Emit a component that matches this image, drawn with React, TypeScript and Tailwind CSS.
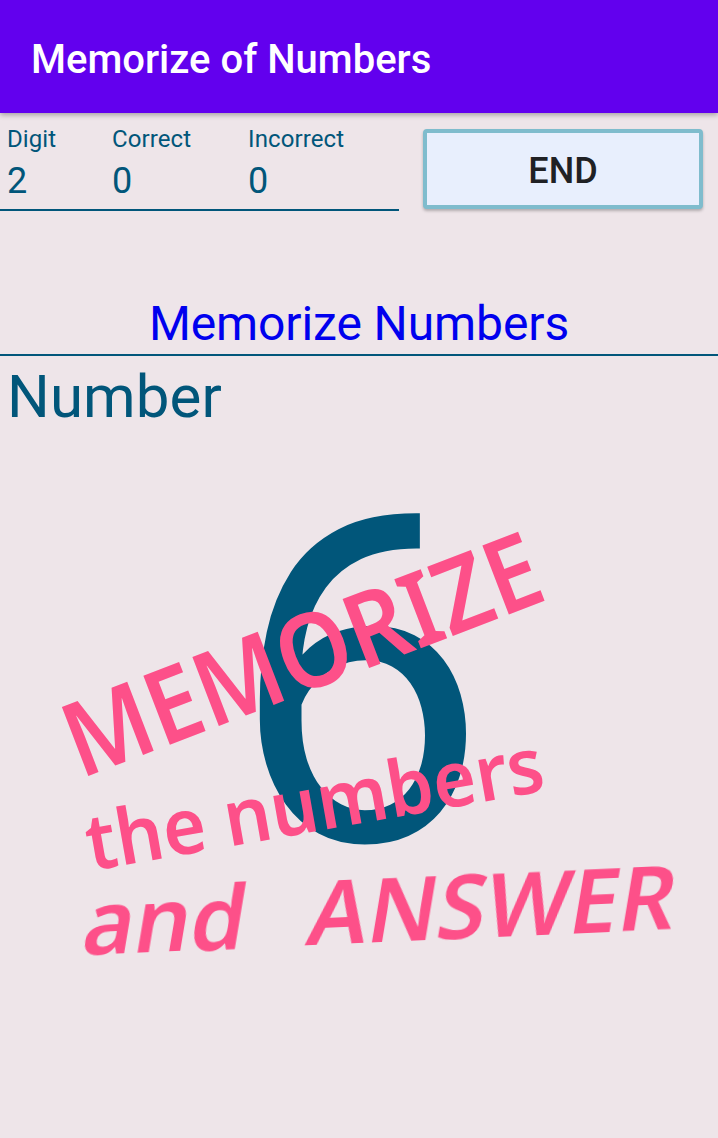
const teal = 'text-[#01567a]';

function Stat({ label, value, width }: { label: string; value: string; width: string }) {
    return (
        <div className={`${width} shrink-0 ${teal}`}>
            <div className="mt-[1px] text-[24px] leading-[28px] tracking-[0.1px]">{label}</div>
            <div className="mt-[7px] text-[36px] leading-[42px] tracking-[0.5px]">{value}</div>
        </div>
    );
}

export default function App() {
    return (
        <div className="relative h-[1138px] w-[718px] overflow-hidden bg-[#eee5e9] font-['Roboto',sans-serif]">
            {/* App bar */}
            <header className="flex h-[113px] items-center bg-[#6200ee] pl-[31px] pt-[7px] shadow-[0_2px_5px_rgba(0,0,0,0.3)]">
                <h1 className="text-[40px] font-medium leading-none text-white">Memorize of Numbers</h1>
            </header>

            {/* Score row */}
            <div className="flex items-start">
                <div className="mt-[11px] h-[87px] w-[399px] overflow-hidden border-b-2 border-[#01567a] pl-[7px]">
                    <div className="flex">
                        <Stat label="Digit" value="2" width="w-[105px]" />
                        <Stat label="Correct" value="0" width="w-[136px]" />
                        <Stat label="Incorrect" value="0" width="w-[120px]" />
                    </div>
                </div>
                <button
                    type="button"
                    className="ml-[24px] mt-[16px] h-[80px] w-[280px] rounded-[4px] border-[4px] border-[#7fbccd] bg-[#e8effd] pt-[3px] text-[36px] font-medium text-[#202124] shadow-[0_2px_3px_rgba(0,0,0,0.25)]"
                >
                    END
                </button>
            </div>

            <h2 className="mt-[84px] text-center text-[48px] leading-[57px] tracking-[-0.1px] text-[#0000ee]">Memorize Numbers</h2>
            <div className="mt-[2px] h-[2px] bg-[#01567a]" />
            <p className={`mt-[5px] pl-[7px] text-[60px] leading-[72px] tracking-[0.1px] ${teal}`}>Number</p>

            {/* Big digit */}
            <div className="mt-[20px] flex h-[460px] justify-center">
                <span className={`text-[459px] leading-[460px] ${teal}`}>6</span>
            </div>

            {/* Stamp over the digit */}
            <div className="pointer-events-none absolute left-0 top-0 font-['Noto_Sans',sans-serif] font-semibold text-[#fd5089] blur-[0.7px]">
                <span className="absolute left-[66px] top-[692px] origin-left -rotate-[21deg] scale-y-[1.1] whitespace-nowrap text-[94px] leading-[100px]">MEMORIZE</span>
                <span className="absolute left-[86px] top-[797px] origin-left -rotate-[10deg] scale-y-[1.05] whitespace-nowrap text-[74px] leading-[90px]">the numbers</span>
                <span className="absolute left-[85px] top-[876px] origin-left -rotate-[2.5deg] -skew-x-[12deg] whitespace-pre text-[88px] leading-[90px] [word-spacing:40px]">and ANSWER</span>
            </div>
        </div>
    );
}
